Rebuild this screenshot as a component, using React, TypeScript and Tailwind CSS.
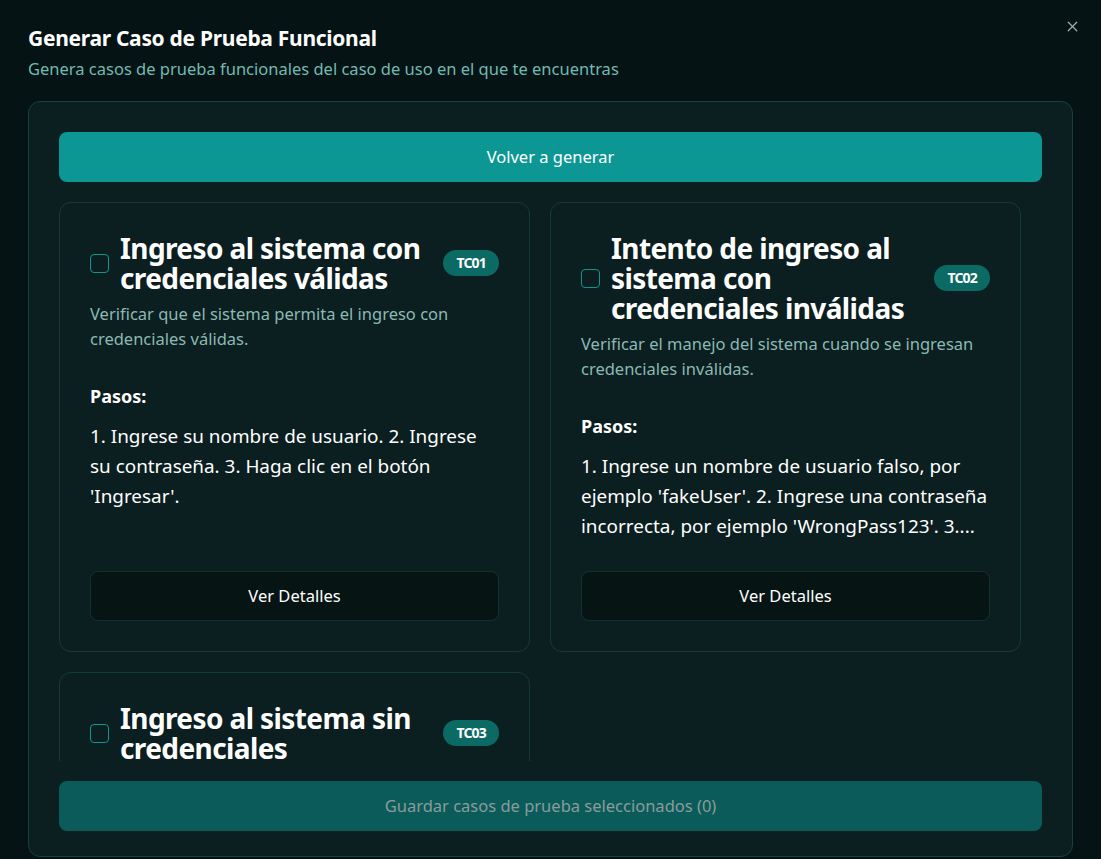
import { X } from "lucide-react";

type TestCase = {
    id: string;
    title: string;
    description: string;
    steps: string;
};

const testCases: TestCase[] = [
    {
        id: "TC01",
        title: "Ingreso al sistema con credenciales válidas",
        description: "Verificar que el sistema permita el ingreso con credenciales válidas.",
        steps: "1. Ingrese su nombre de usuario. 2. Ingrese su contraseña. 3. Haga clic en el botón 'Ingresar'.",
    },
    {
        id: "TC02",
        title: "Intento de ingreso al sistema con credenciales inválidas",
        description: "Verificar el manejo del sistema cuando se ingresan credenciales inválidas.",
        steps: "1. Ingrese un nombre de usuario falso, por ejemplo 'fakeUser'. 2. Ingrese una contraseña incorrecta, por ejemplo 'WrongPass123'. 3....",
    },
    {
        id: "TC03",
        title: "Ingreso al sistema sin credenciales",
        description: "Verificar que el sistema no permita el ingreso sin credenciales.",
        steps: "1. Deje vacíos los campos de usuario y contraseña. 2. Haga clic en el botón 'Ingresar'.",
    },
];

const TestCaseCard = ({ testCase }: { testCase: TestCase }) => {
    return (
        <div className="flex flex-col rounded-xl border border-[#163a3a] bg-[#0b1e20] px-[30px] pt-[30px] pb-[30px]">
            <div className="flex items-center gap-[11px]">
                <div className="h-[19px] w-[19px] shrink-0 rounded-[4px] border border-[#11958f]" />
                <h3 className="flex-1 text-[28px] font-bold leading-[30px] tracking-[-0.6px] text-white">
                    {testCase.title}
                </h3>
                <span className="ml-2 shrink-0 rounded-full bg-[#0c6a65] px-[13px] py-[4px] text-[14px] font-bold leading-[18px] tracking-[-0.8px] text-white">
                    {testCase.id}
                </span>
            </div>
            <p className="mt-[8px] text-[16.5px] leading-[25px] text-[#8cb9b3]">{testCase.description}</p>
            <h4 className="mt-[33px] text-[18px] font-bold leading-[25px] text-white">Pasos:</h4>
            <p className="mt-[12px] pb-[30px] text-[18.9px] leading-[30px] text-white">{testCase.steps}</p>
            <button className="mt-auto h-[50px] w-full rounded-lg border border-[#15302f] bg-[#061413] text-[16.5px] text-white">
                Ver Detalles
            </button>
        </div>
    );
};

export default function App() {
    return (
        <div
            className="h-[859px] w-[1101px] overflow-hidden bg-[#051314] px-[28px] pt-[24px]"
            style={{ fontFamily: '"Noto Sans", sans-serif' }}
        >
            <div className="relative">
                <h1 className="text-[21px] font-bold leading-[28px] tracking-[-0.3px] text-white">
                    Generar Caso de Prueba Funcional
                </h1>
                <p className="mt-[5px] text-[16.5px] leading-[24px] text-[#72bab2]">
                    Genera casos de prueba funcionales del caso de uso en el que te encuentras
                </p>
                <button className="absolute right-[-8px] top-[-6px] text-[#a3abab]">
                    <X size={17} strokeWidth={1.8} />
                </button>
            </div>

            <div className="mt-[20px] flex h-[756px] flex-col gap-5 rounded-xl border border-[#17403e] bg-[#0b1f21] px-[30px] pt-[30px] pb-[25px]">
                <button className="h-[50px] w-full shrink-0 rounded-lg bg-[#0c9794] text-[16.5px] text-white">
                    Volver a generar
                </button>

                <div className="min-h-0 flex-1 overflow-hidden pr-[21px]">
                    <div className="grid grid-cols-2 gap-5">
                        {testCases.map((tc) => (
                            <TestCaseCard key={tc.id} testCase={tc} />
                        ))}
                    </div>
                </div>

                <button className="h-[50px] w-full shrink-0 rounded-lg bg-[#0a5b5a] text-[16.5px] text-[#8b9c9b]">
                    Guardar casos de prueba seleccionados (0)
                </button>
            </div>
        </div>
    );
}
